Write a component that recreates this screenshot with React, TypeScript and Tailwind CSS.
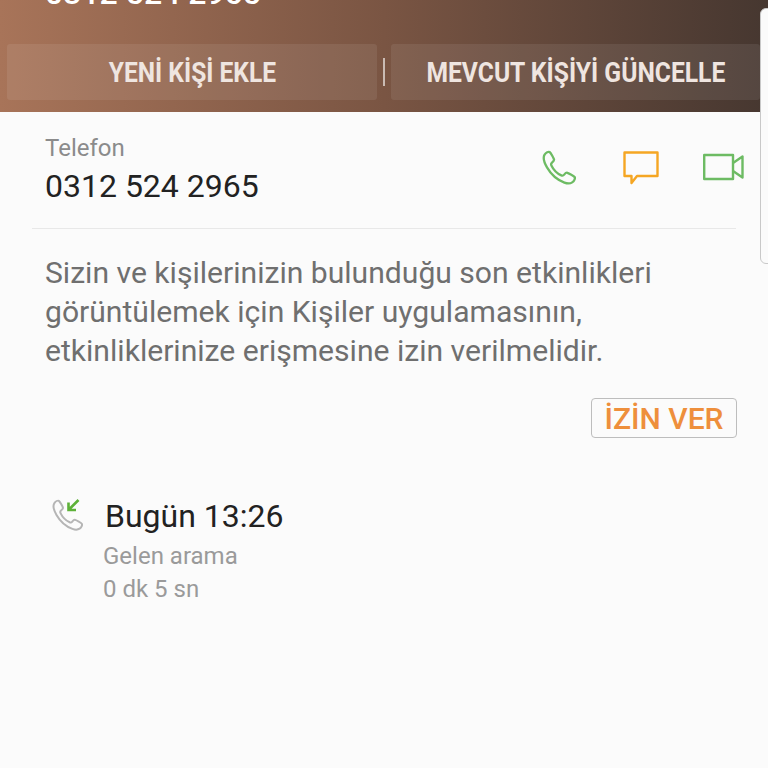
function PhoneShape({ className, color, width }: { className?: string; color: string; width: number }) {
  return (
    <svg className={className} viewBox="0 0 36 36" fill="none" stroke={color} strokeWidth={width} strokeLinejoin="round">
      <path d="M3.6 4.6 C5 2.4 7.4 1.4 8.6 2 C9.8 2.8 12.6 8 13 9.4 C13.3 10.6 12.2 11.6 11 12.6 C10 13.4 9.8 14.2 10.4 15.4 C12.4 19.6 16 23.4 20.4 25.4 C21.6 25.9 22.4 25.6 23.2 24.6 C24.2 23.4 25.2 22.4 26.4 22.8 C28 23.3 32.8 25.8 33.6 27 C34.4 28.2 33.4 31 31.2 32.4 C29.4 33.6 26.6 33.8 23.4 32.6 C17 30.2 10 24.4 6 17.4 C3 12.2 2 7.2 3.6 4.6 Z" />
    </svg>
  );
}

export default function App() {
  return (
    <div className="relative h-[768px] w-[768px] overflow-hidden bg-[#fbfbfb] font-['Roboto',sans-serif]">
      <header className="flex h-[112px] flex-col overflow-hidden bg-gradient-to-r from-[#a87459] via-[#7a5543] to-[#463730] pb-[12px]">
        <div className="mt-[-26px] h-[70px] shrink-0 pl-[45px] text-[32px] leading-[38px] font-medium text-white">0312 524 2965</div>
        <div className="flex h-[56px] shrink-0 items-center pl-[7px]">
          <div className="flex h-full w-[370px] items-center justify-center rounded-[3px] bg-white/[0.08] pt-[2px] text-[28px] font-bold text-[#efe5e0]">
            <span className="inline-block origin-center scale-x-[0.877] whitespace-nowrap">YENİ KİŞİ EKLE</span>
          </div>
          <div className="mx-[6px] h-[28px] w-[2px] bg-white/60" />
          <div className="flex h-full w-[369px] items-center justify-center rounded-[3px] bg-white/[0.08] pt-[2px] text-[28px] font-bold text-[#efe5e0]">
            <span className="inline-block origin-center scale-x-[0.88] whitespace-nowrap">MEVCUT KİŞİYİ GÜNCELLE</span>
          </div>
        </div>
      </header>

      <div className="absolute right-[-8px] top-[8px] h-[256px] w-[16px] rounded-l-[6px] border border-[#c9c9c9] bg-[#fbfbfb]" />

      <section className="mx-[32px] flex h-[117px] items-start border-b border-[#e8e8e8] pl-[13px]">
        <div className="flex-1 pt-[20px]">
          <div className="text-[24px] leading-[32px] text-[#8b8b8b]">Telefon</div>
          <div className="text-[32px] leading-[44px] text-[#222222]">0312 524 2965</div>
        </div>
        <div className="flex items-start pt-[38px]">
          <PhoneShape className="h-[36px] w-[36px]" color="#6dbb63" width={2.3} />
          <svg className="ml-[46px] mt-[1px] h-[34px] w-[36px]" viewBox="0 0 36 34" fill="none" stroke="#f5a623" strokeWidth="2.4" strokeLinejoin="round">
            <path d="M1.5 1.5 H34.5 V25 H14 L8.5 32 V25 H1.5 Z" />
          </svg>
          <svg className="ml-[44px] mr-[-8px] mt-[3px] h-[28px] w-[41px]" viewBox="0 0 41 28" fill="none" stroke="#6dbb63" strokeWidth="2.4" strokeLinejoin="round">
            <path d="M1.2 2 H30 V26 H1.2 Z" />
            <path d="M30 10 L39.5 3.5 V24.5 L30 18" />
          </svg>
        </div>
      </section>

      <p className="ml-[45px] mt-[24px] w-[690px] text-[30.1px] leading-[39px] text-[#6f6f6f]">
        Sizin ve kişilerinizin bulunduğu son etkinlikleri
        <br />
        görüntülemek için Kişiler uygulamasının,
        <br />
        etkinliklerinize erişmesine izin verilmelidir.
      </p>

      <div className="mr-[31px] mt-[28px] flex justify-end">
        <div className="flex h-[40px] w-[146px] items-center justify-center rounded-[4px] border border-[#bdbdbd] text-[30px] font-medium text-[#ee8f3c]">
          İZİN VER
        </div>
      </div>

      <div className="ml-[51px] mt-[61px] flex items-start">
        <div className="relative h-[34px] w-[34px]">
          <PhoneShape className="h-[33px] w-[33px]" color="#b5b5b5" width={2.2} />
          <svg className="absolute left-[15px] top-0 h-[14px] w-[14px]" viewBox="0 0 14 14" fill="none" stroke="#5db138" strokeWidth="2.6">
            <path d="M12.5 1 L3 10.5 M2.5 3.5 V11 H10" />
          </svg>
        </div>
        <div className="ml-[18px] mt-[-4px]">
          <div className="ml-[2px] text-[32px] leading-[42px] text-[#222222]">Bugün 13:26</div>
          <div className="mt-[3px] text-[24px] leading-[33px] text-[#9a9a9a]">Gelen arama</div>
          <div className="text-[24px] leading-[33px] text-[#9a9a9a]">0 dk 5 sn</div>
        </div>
      </div>
    </div>
  );
}
